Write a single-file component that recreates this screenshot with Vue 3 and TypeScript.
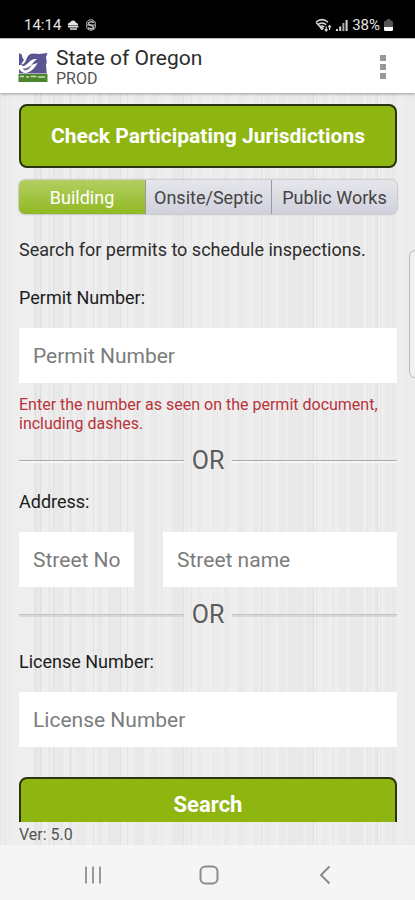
<script setup lang="ts">
import { ref } from 'vue'

type Stripe = [x: number, width: number, opacity: number]

const stripes: Stripe[] = [
  [0, 2, 0.03], [4, 2, 0.04], [9, 1, 0.03], [34, 8, 0.03], [35, 1, 0.06], [40, 1, 0.06],
  [48, 3, 0.03], [53, 9, 0.03], [53, 1, 0.06], [62, 1, 0.04], [69, 3, 0.03], [70, 1, 0.05],
  [76, 9, 0.02], [84, 1, 0.04], [93, 1, 0.08], [97, 5, 0.03], [101, 1, 0.04], [109, 12, 0.03],
  [109, 1, 0.04], [120, 1, 0.05], [127, 1, 0.05], [134, 9, 0.03], [143, 1, 0.04], [151, 6, 0.02],
  [161, 1, 0.04], [172, 12, 0.03], [183, 1, 0.05], [186, 1, 0.05], [190, 2, 0.03], [198, 3, 0.03],
  [213, 1, 0.05], [217, 1, 0.05], [224, 5, 0.02], [238, 6, 0.03], [245, 1, 0.04], [254, 4, 0.03],
  [261, 1, 0.08], [265, 6, 0.03], [273, 1, 0.05], [279, 5, 0.03], [285, 1, 0.06], [288, 14, 0.03],
  [302, 1, 0.04], [306, 8, 0.03], [313, 1, 0.08], [316, 2, 0.03], [323, 4, 0.02], [333, 1, 0.06],
  [339, 7, 0.02], [350, 12, 0.03], [362, 1, 0.04], [367, 1, 0.05], [369, 2, 0.03], [374, 4, 0.03],
  [377, 1, 0.06], [380, 1, 0.04], [385, 5, 0.02], [391, 5, 0.03], [402, 13, 0.01],
]

const tabs = ['Building', 'Onsite/Septic', 'Public Works']
const activeTab = ref(0)
const permit = ref('')
const streetNo = ref('')
const streetName = ref('')
const license = ref('')
</script>

<template>
  <div class="shell">
    <div class="status">
      <div class="status-group">
        <span>14:14</span>
        <svg class="s-icon" viewBox="0 0 12 12" fill="#e4e4e4">
          <path d="M.8 6.400Q.8 3.600 3.200 3.400 4 1.200 6.400 1.400 8.600 1.600 9 3.800 11.300 4 11.200 6.400z" />
          <path d="M1 7h10.400v1.600H1zM3 9.200h7v1.600H3z" />
        </svg>
        <svg class="s-icon" viewBox="0 0 12 12" fill="none" stroke="#c4c4c4">
          <path d="M8.600 4C8.400 2.400 3.400 2.400 3.400 4.600S8.600 6.200 8.600 8.200 3.600 10 3.400 8.400" stroke-width="1.500" />
          <path d="M1.800 5.800C.8 3 3.200.8 6 .8s5.200 2.200 4.200 5M1.800 6.200c-1 2.800 1.400 5 4.200 5s5.200-2.200 4.200-5M1.500 6h9" stroke-width="1" />
        </svg>
      </div>
      <div class="status-group status-right">
        <svg class="wifi" viewBox="0 0 17 14" fill="none" stroke="#d8d8d8" stroke-width="1.500">
          <path d="M1 4.200Q7 -1 13 4.200M2.800 6.600Q7 3.200 11.200 6.600M4.800 8.800Q7 7 9.200 8.800M1 4.200L7 11" />
          <path d="M7 8.500l2 2-2 1.800-1.800-1.800z" fill="#d8d8d8" stroke="none" />
          <path d="M11.200 13V8.500M9.800 11.400l1.400 1.600 1.400-1.600M14.600 12V7.500M13.200 9.200l1.400-1.600L16 9.200" stroke-width="1.200" />
        </svg>
        <svg class="signal" viewBox="0 0 12 12" fill="#d8d8d8">
          <path d="M0 10h2v2H0zM3.200 7.500h2V12h-2z" />
          <path d="M6.400 4h2v8h-2z" opacity=".8" />
          <path d="M9.600 1h2v11h-2z" />
        </svg>
        <span>38%</span>
        <svg class="battery" viewBox="0 0 9 13">
          <path d="M3 0h3v1.500h1.500Q9 2 9 3.500V8H0V3.500Q0 2 1.500 1.500H3z" fill="#555" />
          <path d="M0 8h9v2.500Q9 12 7.500 12h-6Q0 12 0 10.500z" fill="#fff" />
        </svg>
      </div>
    </div>

    <header class="appbar">
      <svg class="logo" viewBox="0 0 30 30">
        <path d="M0 0h30v30H0z" fill="#fff" />
        <path d="M1 1l3.500 2L8 5l4-3 4-.5 5 .5 8.500-1L28 5l.8 5-.8 3 .8 8.500H1z" fill="#5a5590" />
        <path d="M3.500 1H13Q10 3 8.500 7 7.500 10 5 12.500L3.500 11.500 6 8 4.500 6z" fill="#fff" />
        <path d="M1 13.500l2.500-1Q4 15 7 13.500q3-2 5-4.500Q15 6.500 19 7 15 10 13.500 13 17 11.500 19.500 11 16 18 10 20.500q-3 1-6-.5L1 17z" fill="#fff" />
        <path d="M4.500 16.500Q9 17 14 12.500 11.500 18.500 6.500 18.500z" fill="#77739f" />
        <path d="M.5 22h29v8H.5z" fill="#4c862c" />
        <path d="M2 24.500h4M8 25h3M12.500 24.500h6M20 25h7" stroke="#c6dab4" stroke-width="1.500" />
      </svg>
      <div class="titles">
        <h1>State of Oregon</h1>
        <p>PROD</p>
      </div>
      <button class="more" type="button" aria-label="More options">
        <svg viewBox="0 0 6 24" fill="#999"><path d="M0 0h6v6H0zM0 9h6v6H0zM0 18h6v6H0z" /></svg>
      </button>
    </header>

    <div class="body">
      <svg class="stripes" viewBox="0 0 415 10" preserveAspectRatio="none" aria-hidden="true">
        <rect v-for="([x, w, o], i) in stripes" :key="i" :x="x" y="0" :width="w" height="10" :opacity="o" />
      </svg>

      <main class="scroller">
        <button class="primary" type="button">Check Participating Jurisdictions</button>

        <div class="tabs">
          <button
            v-for="(tab, i) in tabs"
            :key="tab"
            type="button"
            :class="['tab', { active: activeTab === i }]"
            :aria-pressed="activeTab === i"
            @click="activeTab = i"
          >{{ tab }}</button>
        </div>

        <p class="intro">Search for permits to schedule inspections.</p>

        <label class="label" for="permit">Permit Number:</label>
        <input id="permit" v-model="permit" class="field" type="text" placeholder="Permit Number">
        <p class="hint">Enter the number as seen on the permit document, including dashes.</p>

        <div class="or"><span>OR</span></div>

        <label class="label" for="street-no">Address:</label>
        <div class="address">
          <input id="street-no" v-model="streetNo" class="field" type="text" placeholder="Street No">
          <input v-model="streetName" class="field" type="text" placeholder="Street name" aria-label="Street name">
        </div>

        <div class="or light"><span>OR</span></div>

        <label class="label" for="license">License Number:</label>
        <input id="license" v-model="license" class="field" type="text" placeholder="License Number">

        <button class="primary search" type="button">Search</button>
      </main>

      <footer class="version">Ver: 5.0</footer>
      <div class="edge-handle"></div>
    </div>

    <nav class="navbar">
      <button type="button" aria-label="Recent apps">
        <svg viewBox="0 0 20 20" stroke="#999" stroke-width="2"><path d="M3 1.500v17M10 1.500v17M17 1.500v17" /></svg>
      </button>
      <button type="button" aria-label="Home">
        <svg viewBox="0 0 20 20" fill="none" stroke="#8c8c8c" stroke-width="2"><rect x="1.500" y="1.500" width="17" height="17" rx="5" /></svg>
      </button>
      <button type="button" aria-label="Back">
        <svg viewBox="0 0 20 20" fill="none" stroke="#8c8c8c" stroke-width="2"><path d="M14.500 1.500L6 10l8.500 8.500" /></svg>
      </button>
    </nav>
  </div>
</template>

<style>
body {
  margin: 0;
  background: #f5f5f5;
}
</style>

<style scoped>
.shell {
  display: flex;
  flex-direction: column;
  height: 100vh;
  font-family: Roboto, "Liberation Sans", sans-serif;
  color: #2c2c2c;
}
.shell * {
  box-sizing: border-box;
}
button,
input {
  font-family: inherit;
  border: 0;
  margin: 0;
  padding: 0;
}
h1,
p {
  margin: 0;
  font-weight: 400;
}
.status {
  flex: none;
  display: flex;
  justify-content: space-between;
  height: 38px;
  padding: 12px 22px 0 24px;
  background: #000;
  color: #e4e4e4;
  font-size: 15px;
  line-height: 26px;
}
.status-group {
  display: flex;
  align-items: center;
  gap: 6px;
}
.status-right {
  gap: 4px;
}
.s-icon {
  width: 12px;
  height: 12px;
}
.wifi {
  width: 17px;
  height: 14px;
}
.signal {
  width: 12px;
  height: 12px;
}
.battery {
  width: 9px;
  height: 13px;
}
.appbar {
  flex: none;
  display: flex;
  align-items: center;
  gap: 8px;
  height: 55px;
  padding: 2px 22px 0 18px;
  background: #fff;
  border-top: 1px solid #bbb;
  box-shadow: 0 1px 3px rgba(0, 0, 0, 0.35);
  z-index: 1;
}
.logo {
  width: 30px;
  height: 30px;
}
.titles {
  flex: 1;
}
.titles h1 {
  font-size: 21px;
  line-height: 24px;
}
.titles p {
  font-size: 16px;
  line-height: 18px;
  color: #555;
}
.more {
  display: flex;
  justify-content: center;
  width: 20px;
  background: none;
}
.more svg {
  width: 6px;
  height: 24px;
}
.body {
  position: relative;
  flex: 1;
  min-height: 0;
  display: flex;
  flex-direction: column;
  background: #eee;
}
.stripes {
  position: absolute;
  inset: 0;
  width: 100%;
  height: 100%;
  opacity: 0.6;
}
.scroller {
  position: relative;
  flex: 1;
  min-height: 0;
  overflow-y: auto;
  scrollbar-width: none;
  display: flex;
  flex-direction: column;
  padding: 11px 18px 0 19px;
}
.scroller > * {
  flex: none;
}
.primary {
  height: 64px;
  border: 2px solid #2b3410;
  border-radius: 8px;
  background: #8eb510;
  color: #fff;
  font-size: 21px;
  font-weight: 700;
}
.tabs {
  display: grid;
  grid-template-columns: repeat(3, 1fr);
  height: 34px;
  margin: 12px 0 24px;
  border-radius: 6px;
  overflow: hidden;
  box-shadow: 0 0 2px #777;
}
.tab {
  background: linear-gradient(#e6e7eb, #cfd0dc);
  color: #444;
  font-size: 18px;
}
.tab + .tab {
  border-left: 1px solid #999;
}
.tab.active {
  background: linear-gradient(#b2cf62, #91b822);
  color: #fff;
}
.intro,
.label {
  font-size: 18px;
  line-height: 24px;
}
.intro {
  margin-bottom: 24px;
}
.label {
  color: #1c1c1c;
  margin-bottom: 18px;
}
.field {
  width: 100%;
  min-width: 0;
  height: 55px;
  padding: 0 14px;
  border-radius: 0;
  background: #fff;
  color: #222;
  font-size: 21px;
}
.field::placeholder {
  color: #7c7c7c;
  opacity: 1;
}
.hint {
  margin: 12px 0 14px;
  color: #b9323a;
  font-size: 16px;
  line-height: 19px;
}
.or {
  display: flex;
  align-items: center;
  gap: 8px;
  margin-bottom: 15px;
  color: #5c5c5c;
  font-size: 25px;
  line-height: 28px;
}
.or::before,
.or::after {
  content: "";
  flex: 1;
  height: 2px;
  border-top: 1px solid #aaa;
  background: #f6f6f6;
}
.or.light {
  margin-bottom: 21px;
}
.or.light::before,
.or.light::after {
  border-top-color: #c4c4c4;
  background: #d8d8d8;
}
.address {
  display: grid;
  grid-template-columns: 115fr 234fr;
  gap: 29px;
  margin-bottom: 14px;
}
.search {
  height: 54px;
  margin-top: 30px;
  font-size: 22px;
}
.version {
  position: relative;
  flex: none;
  height: 23px;
  padding: 1px 19px 0;
  font-size: 16px;
  line-height: 23px;
  color: #555;
}
.edge-handle {
  position: absolute;
  right: -6px;
  top: 157px;
  width: 12px;
  height: 128px;
  border: 1px solid #bbb;
  border-radius: 6px;
  background: #f0f0f0;
  clip-path: inset(0 6px 0 0);
}
.navbar {
  flex: none;
  display: flex;
  justify-content: center;
  gap: 96px;
  height: 55px;
  padding: 4px 0 0 2px;
  background: #f5f5f5;
}
.navbar button {
  display: flex;
  align-items: center;
  background: none;
}
.navbar svg {
  width: 20px;
  height: 20px;
}
</style>
